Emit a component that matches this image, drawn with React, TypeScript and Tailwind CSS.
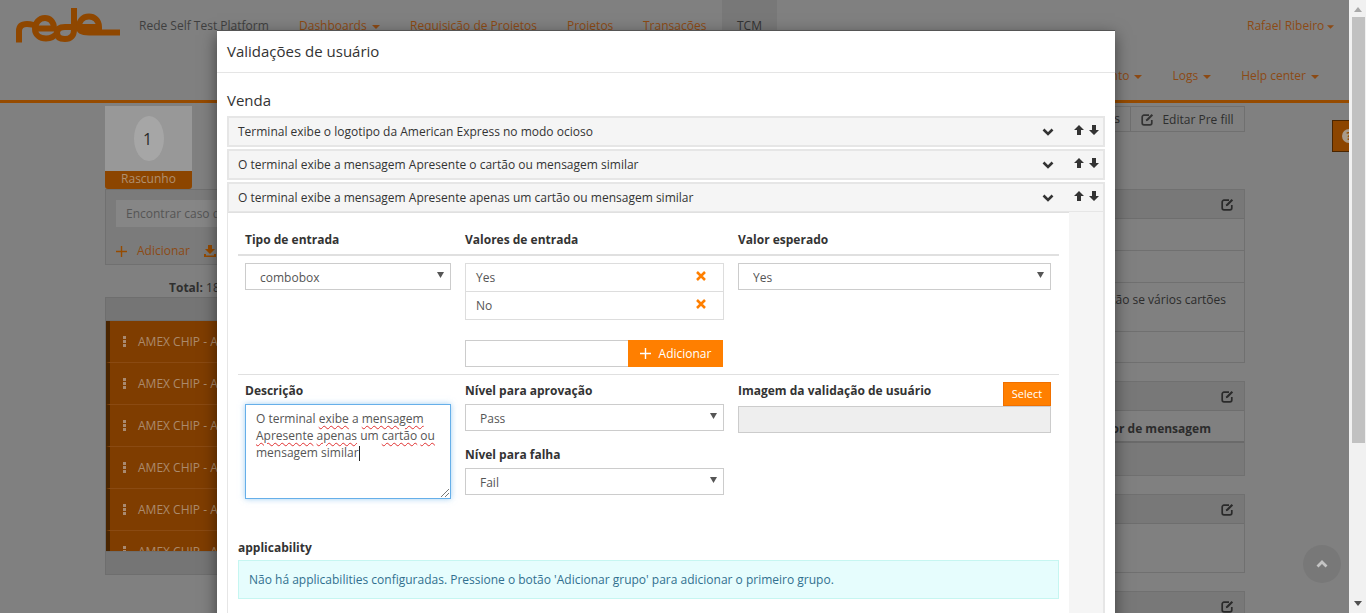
import React from "react";

const Caret = ({ c = "#8c4a14", w = 8, m = "ml-[5px]" }: { c?: string; w?: number; m?: string }) => (
  <svg width={w} height={4} viewBox="0 0 8 4" className={`inline-block ${m} align-middle`}><path d="M0 0h8L4 4z" fill={c} /></svg>
);
const Edit = ({ c = "#2a2a2a" }: { c?: string }) => (
  <svg width="13" height="13" viewBox="0 0 13 13" fill="none" stroke={c}>
    <path d="M8 2.2H3A1.8 1.8 0 0 0 1.2 4v6A1.8 1.8 0 0 0 3 11.8h6A1.8 1.8 0 0 0 10.8 10V7" strokeWidth="1.7" />
    <path d="M4.8 8.3l.5-2L10.6 1l1.5 1.5-5.3 5.3z" fill={c} stroke="none" />
  </svg>
);
const Chevron = () => (
  <svg width="12" height="8" viewBox="0 0 12 8" fill="none"><path d="M1.5 1.5 6 6l4.5-4.5" stroke="#333" strokeWidth="2.6" /></svg>
);
const ArrowUp = () => (
  <svg width="10" height="10" viewBox="0 0 10 10"><path d="M5 0l5 5H7v5H3V5H0z" fill="#333" /></svg>
);
const ArrowDown = () => (
  <svg width="10" height="10" viewBox="0 0 10 10"><path d="M5 10L0 5h3V0h4v5h3z" fill="#333" /></svg>
);
const Cross = () => (
  <svg width="10" height="10" viewBox="0 0 10 10"><path d="M1 1l8 8M9 1L1 9" stroke="#ff7f00" strokeWidth="2.5" /></svg>
);
const Plus = ({ c = "#fff" }: { c?: string }) => (
  <svg width="11" height="11" viewBox="0 0 11 11"><path d="M5.5 0v11M0 5.5h11" stroke={c} strokeWidth="1.4" /></svg>
);

const Logo = () => (
  <svg width="106" height="36" viewBox="14 8 106 36" fill="none" stroke="#8f4700" strokeWidth="6" strokeLinecap="butt">
    <path d="M18 42.5V31C18 26 21 24 26 24C30 24 33 24.5 36 27" />
    <path d="M36 28.5H53C53 21 48 18 44 18C38 18 34 23 34 29C34 35 39 38.5 45 38.5C50 38.5 54 36 57 32" />
    <path d="M76 27H64C59 27 56 29 56 33C56 37 59 39 64 39C70 39 73 35 73 30V8" />
    <path d="M76 27H98C98 20 93 16.5 88 16.5C81 16.5 78 22 78 27C78 31 82 32.5 88 32.5H119" />
  </svg>
);

const Sel = ({ v }: { v: string }) => (
  <div className="relative h-[27px]">
    <select defaultValue={v} className="appearance-none w-full h-full border border-[#ccc] bg-white pl-[14px] pt-[2px] text-[12px] text-[#555] outline-none">
      <option>{v}</option>
    </select>
    <svg width="7" height="6" viewBox="0 0 7 6" className="absolute right-[7px] top-[9px]"><path d="M0 0h7L3.5 6z" fill="#555" /></svg>
  </div>
);

const Item = ({ t }: { t: string }) => (
  <div className="h-[31px] mb-[2px] border-2 border-[#e6e6e6] bg-[#f5f5f5] flex items-center pl-[9px] text-[12px] text-[#333]">
    <span className="flex-1 pt-[1px]">{t}</span>
    <span className="mr-[20px] flex"><Chevron /></span>
    <span className="mr-[5px] flex pb-[3px]"><ArrowUp /></span>
    <span className="mr-[4px] flex pb-[3px]"><ArrowDown /></span>
  </div>
);

const Wavy = ({ children }: { children: React.ReactNode }) => (
  <span className="underline decoration-wavy decoration-[#e03030] decoration-1 underline-offset-2">{children}</span>
);

const Panel = ({ rows, mb = "mb-[18px]" }: { rows: React.ReactNode[]; mb?: string }) => (
  <div className={`border border-[#707070] ${mb}`}>
    <div className="h-[29px] bg-[#787878] border-b border-[#6e6e6e] flex justify-end items-center pr-[10px]"><Edit /></div>
    {rows}
  </div>
);

const Row = ({ h, text, bold, thick }: { h: string; text?: string; bold?: boolean; thick?: boolean }) => (
  <div className={`${h} flex justify-end text-[12px] text-[#2c2c2c] ${thick ? "border-b-2 border-[#6a6a6a]" : "border-b border-[#707070]"} ${bold ? "font-bold items-center pt-[5px]" : "items-start pt-[8px]"}`}>
    {text && <span className={bold ? "pr-[33px]" : "pr-[18px]"}>{text}</span>}
  </div>
);

const AmexRow = () => (
  <div className="h-[42px] shrink-0 bg-[#7f3d00] border-b border-[#8a4a12] border-l-4 border-l-[#4a2500] flex items-center pl-[13px] text-[12px] text-[#ab8a6c] whitespace-nowrap">
    <svg width="3" height="11" viewBox="0 0 3 11" className="mr-[12px]" fill="#a98a70"><rect width="3" height="3" /><rect y="4" width="3" height="3" /><rect y="8" width="3" height="3" /></svg>
    AMEX CHIP - AMEX CHIP
  </div>
);

const NavA = ({ children, c = true }: { children: React.ReactNode; c?: boolean }) => (
  <span className="text-[12px] text-[#8c4a14] whitespace-nowrap">{children}{c && <Caret />}</span>
);

export default function App() {
  return (
    <div className="relative w-[1366px] h-[613px] overflow-hidden flex" style={{ fontFamily: '"Open Sans", sans-serif' }}>
      {/* page behind the dialog */}
      <div className="relative w-[1349px] h-[613px] overflow-hidden bg-[#808080]">
        <header className="h-[103px] border-b-[3px] border-[#964b00] flex flex-col">
          <div className="h-[50px] flex items-start text-[12px]">
            <div className="ml-[15px] mt-[8px] w-[124px] shrink-0"><Logo /></div>
            <span className="mt-[17px] text-[#3f3f3f] whitespace-nowrap w-[160px]">Rede Self Test Platform</span>
            <span className="mt-[17px] w-[111px]"><NavA>Dashboards</NavA></span>
            <span className="mt-[17px] w-[157px]"><NavA c={false}>Requisição de Projetos</NavA></span>
            <span className="mt-[17px] w-[76px]"><NavA c={false}>Projetos</NavA></span>
            <span className="mt-[17px] w-[79px]"><NavA c={false}>Transações</NavA></span>
            <span className="h-[50px] w-[55px] bg-[#787878] pt-[17px] pl-[15px] text-[#333]">TCM</span>
            <span className="mt-[17px] ml-[470px] text-[#8c4a14] whitespace-nowrap">Rafael Ribeiro<Caret w={7} m="ml-[3px]" /></span>
          </div>
          <div className="flex-1 flex justify-end items-start pt-[17px] pr-[30px] gap-[30px]">
            <NavA>Relatório de Pagamento</NavA>
            <NavA>Logs</NavA>
            <NavA>Help center</NavA>
          </div>
        </header>

        <main className="flex pl-[105px] pr-[104px] pt-[3px] justify-between">
          <aside className="w-[400px]">
            <div className="w-[87px] h-[65px] bg-[#989898] flex items-center justify-center">
              <div className="w-[30px] h-[45px] rounded-[50%] bg-[#a6a6a6] flex items-center justify-center text-[16px] text-[#2a2a2a] pr-[2px]">1</div>
            </div>
            <div className="w-[87px] h-[18px] bg-[#8c4500] rounded-b-[3px] text-center text-[12px] leading-[15px] text-[#b09070]">Rascunho</div>
            <div className="h-[76px] border border-[#707070] bg-[#7b7b7b] px-[10px] pt-[10px]">
              <div className="h-[27px] bg-[#868686] pl-[10px] text-[12px] leading-[27px] text-[#555]">Encontrar caso de teste</div>
              <div className="flex items-center mt-[15px] text-[12px] text-[#8c4a14]">
                <Plus c="#964b00" />
                <span className="ml-[10px]">Adicionar</span>
                <svg width="12" height="12" viewBox="0 0 12 12" className="ml-[14px]" fill="#964b00"><path d="M4 0h4v4h3L6 9 1 4h3zM0 9h2v1.5h8V9h2v3H0z" /></svg>
                <span className="ml-[5px]">Importar</span>
              </div>
            </div>
            <div className="h-[32px] flex items-end pl-[64px] text-[12px] text-[#2f2f2f]"><b>Total:</b>&nbsp;18</div>
            <div className="border border-[#6e6e6e]">
              <div className="h-[23px] bg-[#757575] border-b border-[#6e6e6e]" />
              <div className="h-[230px] overflow-hidden flex flex-col">
                <AmexRow /><AmexRow /><AmexRow /><AmexRow /><AmexRow /><AmexRow />
              </div>
              <div className="h-[23px] bg-[#757575] border-t border-[#6e6e6e]" />
            </div>
          </aside>

          <section className="w-[400px]">
            <div className="h-[27px] flex justify-end">
              <div className="h-[26px] px-[10px] border border-[#707070] flex items-center text-[12px] text-[#2e2e2e]">Campos</div>
              <div className="h-[26px] w-[114px] border border-l-0 border-[#707070] flex items-center justify-center gap-[8px] text-[12px] text-[#2e2e2e] pt-[1px]"><Edit c="#333" />Editar Pre fill</div>
            </div>
            <div className="h-[56px]" />
            <Panel rows={[
              <Row key="1" h="h-[32px]" />,
              <Row key="2" h="h-[32px]" />,
              <Row key="3" h="h-[49px]" text="Rejeição se vários cartões" />,
              <div key="4" className="h-[30px]" />,
            ]} />
            <Panel rows={[
              <Row key="1" h="h-[32px]" text="Indicador de mensagem" bold thick />,
              <div key="2" className="h-[32px] bg-[#797979]" />,
            ]} />
            <Panel rows={[<div key="1" className="h-[48px]" />]} />
            <Panel rows={[<div key="1" className="h-[40px]" />]} mb="mb-0" />
          </section>
        </main>

        {/* floating help tab */}
        <div className="absolute left-[1332px] top-[120px] w-[20px] h-[32px] bg-[#8c4500] border border-[#4a2500] flex items-center pl-[9px]">
          <div className="w-[14px] h-[14px] rounded-full bg-[#a89a8a] shrink-0 text-[10px] leading-[14px] font-bold text-center text-[#8c4500]">?</div>
        </div>
        {/* scroll to top */}
        <div className="absolute left-[1303px] top-[545px] w-[38px] h-[38px] rounded-full bg-[#787878] flex items-center justify-center">
          <svg width="12" height="8" viewBox="0 0 12 8" fill="none"><path d="M1.5 6.5 6 2l4.5 4.5" stroke="#c4c4c4" strokeWidth="2.8" /></svg>
        </div>

        {/* dialog */}
        <div className="absolute left-[217px] top-[30px] w-[898px] h-[640px] bg-white border-t border-[#555] shadow-[0_5px_15px_rgba(0,0,0,0.5)]">
          <div className="h-[42px] border-b border-[#e5e5e5] flex items-center pl-[10px] text-[15px] text-[#333]">Validações de usuário</div>
          <div className="px-[10px]">
            <div className="h-[43px] pt-[17px] text-[15px] leading-[20px] text-[#333]">Venda</div>
            <Item t="Terminal exibe o logotipo da American Express no modo ocioso" />
            <Item t="O terminal exibe a mensagem Apresente o cartão ou mensagem similar" />
            <Item t="O terminal exibe a mensagem Apresente apenas um cartão ou mensagem similar" />
            <div className="-mt-[3px] bg-[#f5f5f5] border-2 border-t-0 border-[#e6e6e6] h-[420px] relative">
              <div className="w-[841px] h-full -ml-[1px] bg-white border-t border-[#e0e0e0] px-[10px]">
                <div className="h-[43px] border-b-2 border-[#e0e0e0] px-[7px] pb-[5px] grid grid-cols-[206px_259px_313px] gap-x-[14px] items-end text-[12px] font-bold text-[#333]">
                  <span>Tipo de entrada</span>
                  <span>Valores de entrada</span>
                  <span>Valor esperado</span>
                </div>
                <div className="h-[119px] border-b border-[#e0e0e0] pt-[7px] px-[7px] grid grid-cols-[206px_259px_313px] gap-x-[14px] items-start">
                  <Sel v="combobox" />
                  <div>
                    <div className="border border-[#ddd] text-[12px] text-[#555]">
                      <div className="h-[28px] border-b border-[#ddd] flex items-center justify-between pl-[10px] pr-[17px]"><span>Yes</span><span className="flex pb-[3px]"><Cross /></span></div>
                      <div className="h-[27px] flex items-center justify-between pl-[10px] pr-[17px]"><span>No</span><span className="flex pb-[3px]"><Cross /></span></div>
                    </div>
                    <div className="flex mt-[20px] h-[27px] w-[258px]">
                      <div className="flex-1 border border-[#ccc] border-r-0" />
                      <div className="w-[95px] bg-[#ff7f00] flex items-center justify-center gap-[8px] text-[12px] text-white"><Plus />Adicionar</div>
                    </div>
                  </div>
                  <Sel v="Yes" />
                </div>
                <div className="pt-[7px] px-[7px] grid grid-cols-[206px_259px_313px] gap-x-[14px] items-start">
                  <div>
                    <div className="h-[22px] text-[12px] font-bold text-[#333]">Descrição</div>
                    <div className="relative h-[95px] border border-[#66afe9] shadow-[0_0_6px_rgba(102,175,233,0.6)] px-[10px] pt-[5px] text-[12px] leading-[17px] text-[#555]">
                      O terminal <Wavy>exibe</Wavy> a <Wavy>mensagem</Wavy> <Wavy>Apresente</Wavy> <Wavy>apenas</Wavy> um <Wavy>cartão</Wavy> <Wavy>ou</Wavy> mensagem similar
                      <span className="inline-block w-px h-[15px] bg-[#222] align-middle" />
                      <svg width="10" height="10" viewBox="0 0 10 10" className="absolute right-0 bottom-0" stroke="#555" strokeWidth="0.8"><path d="M1 9l8-8M5 9l4-4" /></svg>
                    </div>
                  </div>
                  <div>
                    <div className="h-[22px] text-[12px] font-bold text-[#333]">Nível para aprovação</div>
                    <Sel v="Pass" />
                    <div className="mt-[15px] h-[22px] text-[12px] font-bold text-[#333]">Nível para falha</div>
                    <Sel v="Fail" />
                  </div>
                  <div>
                    <div className="h-[24px] flex justify-between text-[12px] font-bold text-[#333]">
                      <span>Imagem da validação de usuário</span>
                      <span className="w-[48px] h-[24px] bg-[#ff7f00] border border-[#f07000] text-white font-normal text-[11px] flex items-center justify-center">Select</span>
                    </div>
                    <div className="h-[27px] bg-[#eee] border border-[#ccc]" />
                  </div>
                </div>
                <div className="mt-[40px] h-[21px] text-[12px] font-bold text-[#333]">applicability</div>
                <div className="w-[821px] h-[39px] bg-[#e6fdfd] border border-[#c6f6f1] flex items-center pl-[10px] text-[12px] text-[#31708f]">Não há applicabilities configuradas. Pressione o botão 'Adicionar grupo' para adicionar o primeiro grupo.</div>
              </div>
            </div>
          </div>
        </div>
      </div>

      {/* scrollbar */}
      <div className="w-[17px] h-[613px] bg-[#f1f1f1] flex flex-col items-center">
        <svg width="8" height="5" viewBox="0 0 8 5" className="mt-[7px]"><path d="M4 0l4 5H0z" fill="#a8a8a8" /></svg>
        <div className="w-[13px] h-[426px] mt-[5px] ml-[2px] bg-[#c1c1c1]" />
        <div className="flex-1" />
        <svg width="8" height="5" viewBox="0 0 8 5" className="mb-[7px]"><path d="M4 5L0 0h8z" fill="#505050" /></svg>
      </div>
    </div>
  );
}
